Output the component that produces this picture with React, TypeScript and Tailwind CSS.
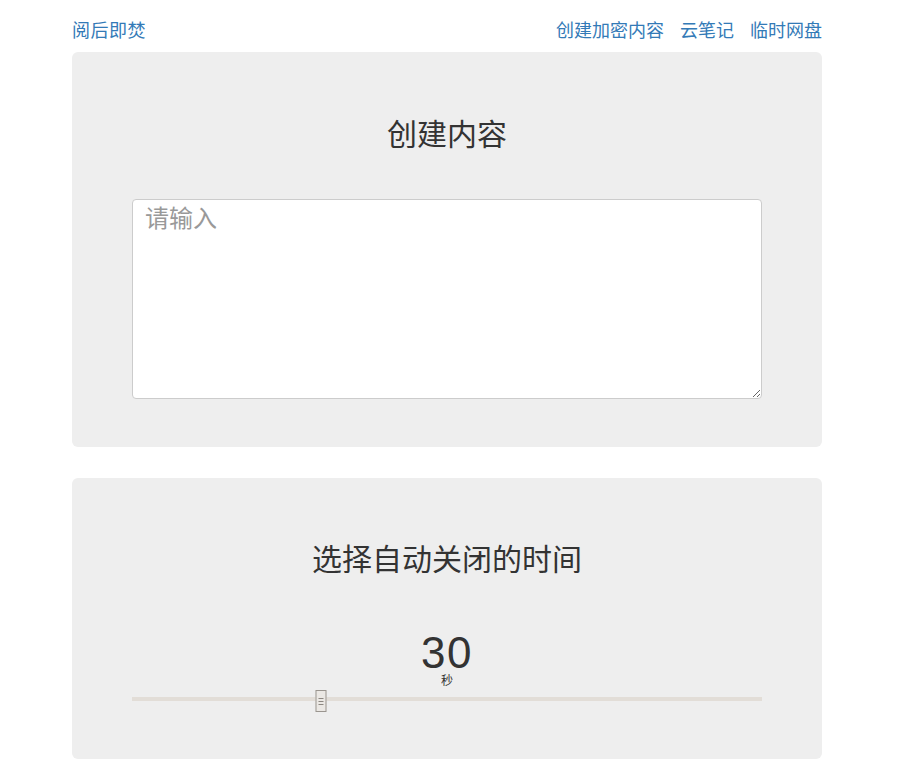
import { useState } from 'react';

const font = { fontFamily: '"Liberation Sans", "Noto Sans CJK SC", sans-serif' };

function Slider({ value, max }: { value: number; max: number }) {
  const pct = (value / max) * 100;
  return (
    <div className="relative h-[22px] w-full">
      <div className="absolute left-0 right-0 top-[7px] h-[4px] bg-[#e2ddd7]" />
      <div
        className="absolute top-0 flex h-[22px] w-[11px] -translate-x-1/2 flex-col items-center justify-center gap-[2px] border border-[#9a958f] bg-[#ebe8e4]"
        style={{ left: `${pct}%` }}
      >
        <span className="h-px w-[5px] bg-[#8c8781]" />
        <span className="h-px w-[5px] bg-[#8c8781]" />
        <span className="h-px w-[5px] bg-[#8c8781]" />
      </div>
    </div>
  );
}

export default function App() {
  const [text, setText] = useState('');
  return (
    <div className="min-h-screen bg-white text-[#333]" style={font}>
      <div className="ml-[72px] w-[750px]">
        <nav className="flex h-[52px] items-center justify-between pt-[10px] text-[18px] text-[#337ab7]">
          <a href="#" className="tracking-[0.5px]">阅后即焚</a>
          <div className="flex gap-[16px]">
            <a href="#">创建加密内容</a>
            <a href="#">云笔记</a>
            <a href="#">临时网盘</a>
          </div>
        </nav>

        <section className="rounded-[6px] bg-[#eee] px-[60px] pt-[48px] pb-[48px]">
          <h2 className="mt-[18px] text-center text-[30px] leading-[33px]">创建内容</h2>
          <textarea
            value={text}
            onChange={(e) => setText(e.target.value)}
            placeholder="请输入"
            className="mt-[48px] block h-[200px] w-full rounded-[4px] border border-[#ccc] bg-white px-[12px] py-[2px] text-[24px] leading-[34px] text-[#555] placeholder:text-[#999] focus:outline-none"
          />
        </section>

        <section className="mt-[31px] rounded-[6px] bg-[#eee] px-[60px] pt-[48px] pb-[47px]">
          <h2 className="mt-[17px] text-center text-[30px] leading-[33px]">选择自动关闭的时间</h2>
          <div className="mt-[57px] text-center text-[44px] leading-[40px] tracking-[1.5px]">30</div>
          <div className="mt-[1px] text-center text-[12px] leading-[14px]">秒</div>
          <div className="mt-[2px]">
            <Slider value={30} max={100} />
          </div>
        </section>
      </div>
    </div>
  );
}
